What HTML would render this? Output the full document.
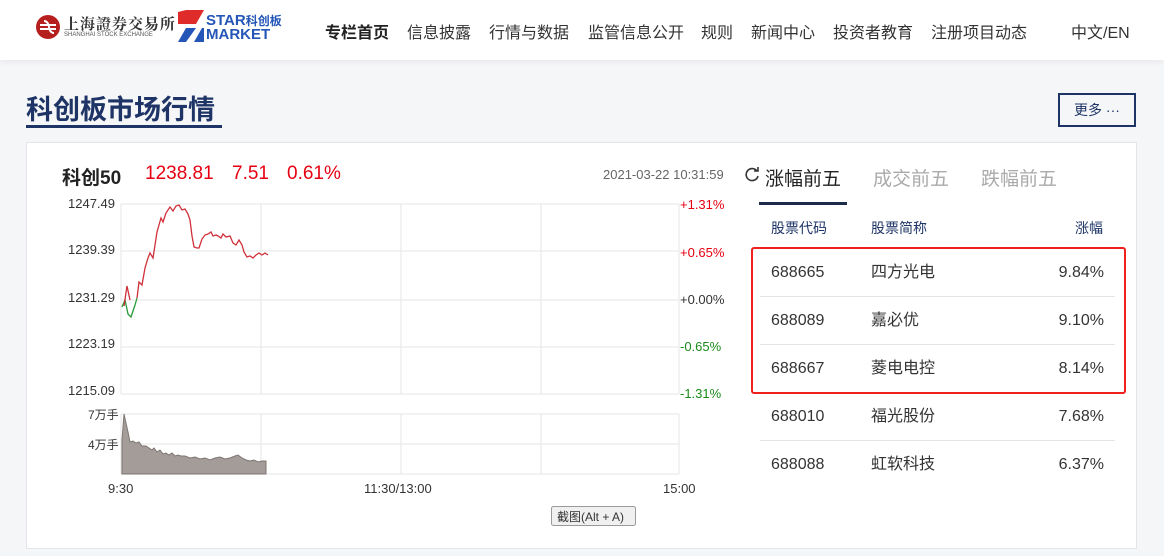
<!DOCTYPE html>
<html><head><meta charset="utf-8"><style>
body{margin:0;width:1164px;height:556px;overflow:hidden;background:#f5f6f8;font-family:"Liberation Sans","Noto Sans CJK SC",sans-serif;position:relative}
.hdr{position:absolute;left:0;top:0;width:1164px;height:60px;background:#fff;box-shadow:0 2px 6px rgba(0,0,0,.06)}
.nav{position:absolute;top:19px;font-size:16px;color:#333;white-space:nowrap}
.abs{position:absolute;white-space:nowrap}
.card{position:absolute;left:26px;top:142px;width:1109px;height:405px;background:#fff;border:1px solid #e3e5e8}
.row{position:absolute;left:760px;width:355px;height:47px;border-bottom:1px solid #e2e4e8;font-size:16px;color:#333}
.row span{position:absolute;top:0;line-height:47px;height:47px}
.row .c{left:11px}
.row .n{left:111px}
.row .p{right:11px}
</style></head><body>
<div class="hdr">
 <svg class="abs" style="left:35px;top:14px" width="26" height="26" viewBox="0 0 26 26"><circle cx="13" cy="13" r="12" fill="#b5201e"/><path d="M5 11h16M5 15h16" stroke="#fff" stroke-width="2"/><path d="M9 7q4 0 5 6t5 6" stroke="#fff" stroke-width="2" fill="none"/></svg>
 <div class="abs" style="left:64px;top:13px;font-size:15px;font-weight:bold;color:#333;font-family:'Noto Serif CJK SC',serif;letter-spacing:1px">上海證券交易所</div>
 <div class="abs" style="left:64px;top:32px;font-size:6px;color:#555">SHANGHAI STOCK EXCHANGE</div>
 <svg class="abs" style="left:176px;top:10px" width="30" height="32" viewBox="0 0 30 32"><path d="M10 0h18L20 14 10 14z" fill="#e02b2b"/><path d="M20 18L10 32H2l8-14z" fill="#2456b8"/><path d="M2 2l8-2v14l-8 0z" fill="#e02b2b"/><path d="M28 18v14H18l8-14z" fill="#2456b8"/></svg>
 <div class="abs" style="left:206px;top:14px;font-size:15px;font-weight:bold;color:#2456b8;line-height:14px">STAR<span style="font-size:12px">科创板</span><br>MARKET</div>
 <div class="nav" style="left:325px;font-weight:bold;color:#222">专栏首页</div>
 <div class="nav" style="left:407px">信息披露</div>
 <div class="nav" style="left:489px">行情与数据</div>
 <div class="nav" style="left:588px">监管信息公开</div>
 <div class="nav" style="left:701px">规则</div>
 <div class="nav" style="left:751px">新闻中心</div>
 <div class="nav" style="left:833px">投资者教育</div>
 <div class="nav" style="left:931px">注册项目动态</div>
 <div class="nav" style="left:1071px">中文/EN</div>
</div>
<div class="abs" style="left:26px;top:88px;font-size:27px;font-weight:bold;color:#1e3466">科创板市场行情</div>
<div class="abs" style="left:26px;top:125px;width:196px;height:3px;background:#1e3466"></div>
<div class="abs" style="left:1058px;top:93px;width:78px;height:34px;border:2px solid #1e3466;box-sizing:border-box;font-size:14px;color:#1e3466;text-align:center;line-height:30px">更多 ···</div>
<div class="card"></div>
<div class="abs" style="left:62px;top:163px;font-size:19px;font-weight:bold;color:#222">科创50</div>
<div class="abs" style="left:145px;top:163px;font-size:19px;color:#e60012">1238.81</div>
<div class="abs" style="left:232px;top:163px;font-size:19px;color:#e60012">7.51</div>
<div class="abs" style="left:287px;top:163px;font-size:19px;color:#e60012">0.61%</div>
<div class="abs" style="left:603px;top:167px;font-size:13px;color:#666">2021-03-22 10:31:59</div>
<svg class="abs" style="left:0;top:0" width="740" height="556">
 <g stroke="#e6e6e6" stroke-width="1" fill="none">
  <path d="M121 204H679M121 251H679M121 300H679M121 347H679M121 394H679M121 414H679M121 444H679M121 474H679"/>
  <path d="M121 204V394M261 204V394M401 204V394M541 204V394M679 204V394M121 414V474M261 414V474M401 414V474M541 414V474M679 414V474"/>
 </g>
 <g font-size="13" fill="#333" font-family="Liberation Sans,sans-serif">
  <text x="68" y="208">1247.49</text><text x="68" y="254">1239.39</text><text x="68" y="302">1231.29</text><text x="68" y="348">1223.19</text><text x="68" y="395">1215.09</text>
  <text x="680" y="209" fill="#e60012">+1.31%</text><text x="680" y="257" fill="#e60012">+0.65%</text><text x="680" y="304">+0.00%</text><text x="680" y="351" fill="#1a8a1a">-0.65%</text><text x="680" y="398" fill="#1a8a1a">-1.31%</text>
  <text x="88" y="419" font-size="12">7万手</text><text x="88" y="449" font-size="12">4万手</text>
  <text x="108" y="493">9:30</text><text x="364" y="493">11:30/13:00</text><text x="663" y="493">15:00</text>
 </g>
 <path d="M122 307L125 300L128 314L131 317L135 305L137 298" stroke="#2a9a3a" stroke-width="1.3" fill="none"/>
 <path d="M124 306L127 286L130 300M137 298L139 282L142 285L145 268L148 258L150 253L153 258L157 232L161 218L163 222L166 213L170 207L173 211L176 206L179 205L182 210L185 209L188 214L190 220L192 236L194 247L197 248L199 248L202 239L205 235L208 234L211 232L213 236L216 235L218 236L221 238L223 234L226 237L230 236L233 243L236 245L239 240L242 245L244 252L247 257L250 256L253 258L256 255L259 253L262 255L265 253L268 255" stroke="#d0303a" stroke-width="1.3" fill="none"/>
 <path d="M122 474L122 440L124 414L128 432L130 442L133 441L136 443L139 442L142 446L146 446L149 448L152 450L154 448L157 452L160 450L163 454L166 453L169 455L172 453L175 456L178 455L181 456L185 456L190 458L195 457L200 459L205 458L210 460L215 458L220 457L225 459L230 458L235 456L238 455L242 458L246 460L250 461L254 460L258 462L262 461L266 461L266 474Z" fill="#a49c98" stroke="#7d7572" stroke-width="1"/>
 <rect x="551.5" y="506.5" width="84" height="19" rx="2" fill="#f0f0f0" stroke="#999"/>
 <text x="557" y="521" font-size="12" fill="#333">截图(Alt + A)</text>
</svg>
<svg class="abs" style="left:744px;top:166px" width="16" height="16" viewBox="0 0 16 16"><path d="M13 5A6 6 0 1 0 14 10" stroke="#333" stroke-width="1.6" fill="none"/><path d="M10 5h4V1" stroke="#333" stroke-width="1.6" fill="none"/></svg>
<div class="abs" style="left:765px;top:164px;font-size:19px;color:#222">涨幅前五</div>
<div class="abs" style="left:873px;top:164px;font-size:19px;color:#aaa">成交前五</div>
<div class="abs" style="left:981px;top:164px;font-size:19px;color:#aaa">跌幅前五</div>
<div class="abs" style="left:759px;top:202px;width:88px;height:3px;background:#1c2b4a"></div>
<div class="abs" style="left:771px;top:218px;font-size:14px;color:#1e3466">股票代码</div>
<div class="abs" style="left:871px;top:218px;font-size:14px;color:#1e3466">股票简称</div>
<div class="abs" style="left:1075px;top:218px;font-size:14px;color:#1e3466">涨幅</div>
<div class="row" style="top:249px"><span class="c">688665</span><span class="n">四方光电</span><span class="p">9.84%</span></div>
<div class="row" style="top:297px"><span class="c">688089</span><span class="n">嘉必优</span><span class="p">9.10%</span></div>
<div class="row" style="top:345px"><span class="c">688667</span><span class="n">菱电电控</span><span class="p">8.14%</span></div>
<div class="row" style="top:393px"><span class="c">688010</span><span class="n">福光股份</span><span class="p">7.68%</span></div>
<div class="row" style="top:441px;border-bottom:none"><span class="c">688088</span><span class="n">虹软科技</span><span class="p">6.37%</span></div>
<div class="abs" style="left:751px;top:247px;width:375px;height:147px;border:2.5px solid #f0201c;border-radius:3px;box-sizing:border-box"></div>
</body></html>
